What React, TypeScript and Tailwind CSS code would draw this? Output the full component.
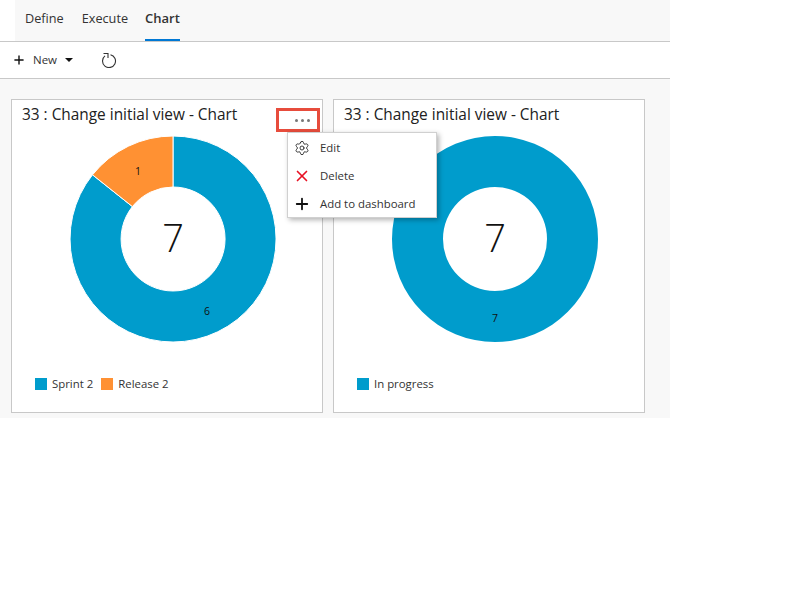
import React from 'react'
import { Plus, X, Settings } from 'lucide-react'

const BLUE = '#009ccc'
const ORANGE = '#ff9133'

interface Slice {
  color: string
  path: string
  label: string
  labelX: number
  labelY: number
}

interface ChartCardProps {
  total: number
  slices: Slice[]
  legend: { name: string; color: string }[]
  children?: React.ReactNode
}

// Full ring path with a hole, used when there is only one slice
const FULL_RING =
  'M103 0A103 103 0 1 1 103 206A103 103 0 1 1 103 0ZM103 51A52 52 0 1 0 103 155A52 52 0 1 0 103 51Z'

const ChartCard: React.FC<ChartCardProps> = ({ total, slices, legend, children }) => {
  return (
    <div className="relative w-[312px] h-[314px] bg-white border border-[#c8c8c8] flex flex-col">
      <div className="pl-[10px] pt-[4px] h-[36px] text-[15.4px] leading-[22px] text-[#212121]">
        33 : Change initial view - Chart
      </div>
      <div className="relative ml-[58px] w-[206px] h-[206px]">
        <svg width="206" height="206" viewBox="0 0 206 206">
          {slices.map((s) => (
            <path key={s.color} d={s.path} fill={s.color} stroke="#ffffff" strokeWidth={slices.length > 1 ? 1 : 0} fillRule="evenodd" />
          ))}
          {slices.map((s) => (
            <text key={s.label} x={s.labelX} y={s.labelY} fontSize="10.5" textAnchor="middle" fill="#111111">
              {s.label}
            </text>
          ))}
        </svg>
        <div className="absolute inset-0 pb-[4px] flex items-center justify-center text-[38px] text-[#111111] font-light">
          {total}
        </div>
      </div>
      <div className="flex items-center pl-[23px] mt-[35px] text-[11.4px] leading-[14px] text-[#333333]">
        {legend.map((l) => (
          <div key={l.name} className="flex items-center mr-[8px]">
            <span className="w-[12px] h-[12px] mr-[5px]" style={{ backgroundColor: l.color }} />
            <span>{l.name}</span>
          </div>
        ))}
      </div>
      {children}
    </div>
  )
}

export default function App() {
  return (
    <div className="w-[670px] font-['Open_Sans',sans-serif] bg-white">
      {/* Tabs */}
      <div className="h-[42px] border-b border-[#c8c8c8] pl-[15px]">
        <div className="h-[41px] bg-[#f8f8f8] flex items-start pl-[10px] text-[12.7px] text-[#333333]">
          <div className="pt-[9px] mr-[18px]">Define</div>
          <div className="pt-[9px] mr-[17px]">Execute</div>
          <div className="pt-[9px] h-[41px] border-b-2 border-[#0078d4] font-semibold text-[13px]">Chart</div>
        </div>
      </div>

      {/* Toolbar */}
      <div className="h-[37px] border-b border-[#c8c8c8] flex items-center pl-[12px] text-[11.5px] text-[#333333]">
        <Plus size={14} strokeWidth={2.4} className="text-[#111111]" />
        <span className="ml-[7px]">New</span>
        <span className="ml-[8px] w-0 h-0 border-x-[4px] border-x-transparent border-t-[4px] border-t-[#111111]" />
        <svg width="16" height="16" viewBox="0 0 16 16" fill="none" stroke="#333333" strokeWidth="1.1" className="ml-[28px] -mt-[1px]">
          <path d="M9.5 2.7A6.5 6.5 0 1 1 4 3.9" />
          <path d="M2.5 1.5H7V6" />
        </svg>
      </div>

      {/* Charts */}
      <div className="h-[339px] bg-[#f8f8f8] pt-[20px] pl-[11px] flex gap-[10px] items-start">
        <ChartCard
          total={7}
          slices={[
            {
              color: BLUE,
              path: 'M103 0A103 103 0 1 1 22.5 38.8L62.4 70.6A52 52 0 1 0 103 51Z',
              label: '6',
              labelX: 137,
              labelY: 179,
            },
            {
              color: ORANGE,
              path: 'M103 0A103 103 0 0 0 22.5 38.8L62.4 70.6A52 52 0 0 1 103 51Z',
              label: '1',
              labelX: 68,
              labelY: 39,
            },
          ]}
          legend={[
            { name: 'Sprint 2', color: BLUE },
            { name: 'Release 2', color: ORANGE },
          ]}
        >
          {/* Highlight round the more-actions button */}
          <div className="absolute left-[264px] top-[8px] w-[44px] h-[24px] border-[3px] border-[#e74c3c] flex items-center justify-end pr-[7px] gap-[3px]">
            <span className="w-[3px] h-[3px] rounded-full bg-[#777777]" />
            <span className="w-[3px] h-[3px] rounded-full bg-[#777777]" />
            <span className="w-[3px] h-[3px] rounded-full bg-[#777777]" />
          </div>

          {/* Context menu */}
          <div className="absolute z-10 left-[275px] top-[32px] w-[150px] h-[86px] bg-white border border-[#d0d0d0] shadow-[2px_2px_5px_rgba(0,0,0,0.3)] py-[1px] text-[11.4px] text-[#333333]">
            <div className="h-[28px] flex items-center pl-[6px]">
              <Settings size={16} strokeWidth={1.3} className="text-[#222222]" />
              <span className="ml-[10px]">Edit</span>
            </div>
            <div className="h-[28px] flex items-center pl-[5px]">
              <X size={18} strokeWidth={2.2} className="text-[#e81123]" />
              <span className="ml-[9px]">Delete</span>
            </div>
            <div className="h-[28px] flex items-center pl-[5px]">
              <Plus size={18} strokeWidth={2.4} className="text-[#111111]" />
              <span className="ml-[9px]">Add to dashboard</span>
            </div>
          </div>
        </ChartCard>

        <ChartCard
          total={7}
          slices={[{ color: BLUE, path: FULL_RING, label: '7', labelX: 103, labelY: 186 }]}
          legend={[{ name: 'In progress', color: BLUE }]}
        />
      </div>
    </div>
  )
}
